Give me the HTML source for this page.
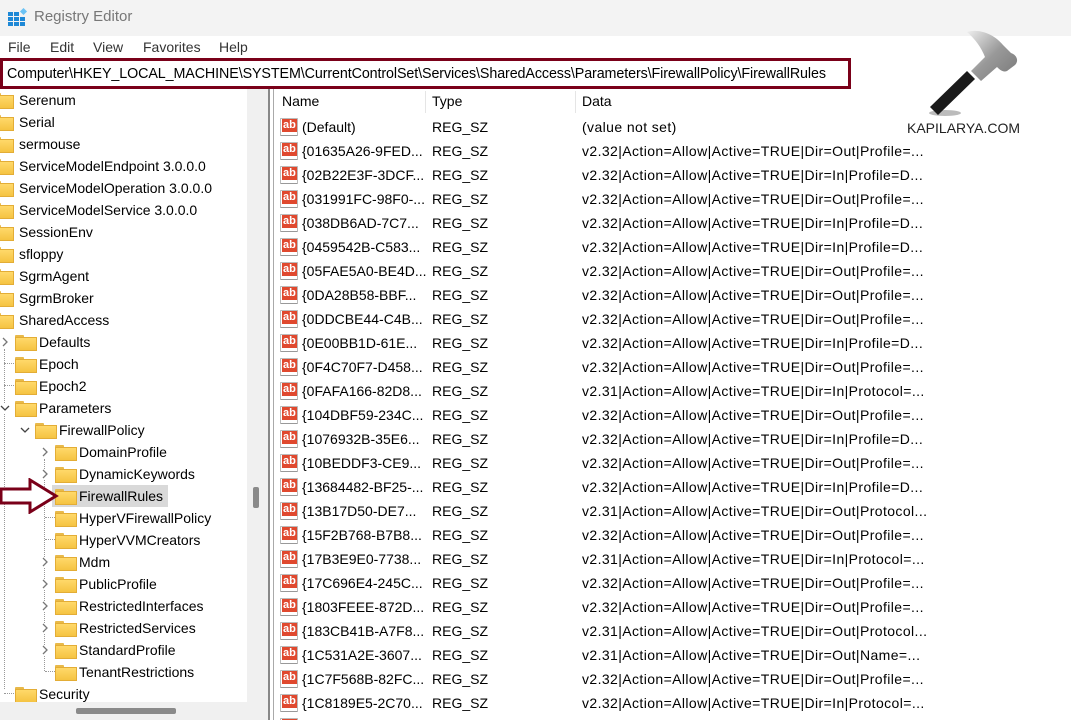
<!DOCTYPE html>
<html><head><meta charset="utf-8"><style>
*{margin:0;padding:0;box-sizing:border-box}
html,body{width:1071px;height:720px;overflow:hidden}
body{background:#fff;font-family:"Liberation Sans",sans-serif;font-size:14px;color:#000;position:relative}
.abs{position:absolute;white-space:nowrap}
#title{left:0;top:0;width:1071px;height:36px;background:#f3f3f3}
#menu{left:0;top:36px;width:1071px;height:22px;background:#fff;color:#333}
#addr{left:0;top:58px;width:851px;height:31px;border:3px solid #7a0019;background:#fff;padding:5px 0 0 4px;font-size:14.3px;letter-spacing:-0.1px}
.t{position:absolute;height:22px;line-height:22px;white-space:nowrap}
.fold{position:absolute;width:20px;height:14px;top:4px}
.fold:before{content:"";position:absolute;left:0;top:0;width:9px;height:4px;background:#e8b94a;border-radius:1px 1px 0 0}
.fold:after{content:"";position:absolute;left:0;top:2px;width:20px;height:12px;background:linear-gradient(#ffd96a,#f5c342);border:1px solid #e3ad36}
.chev{position:absolute;width:10px;height:10px}
.r{position:absolute;left:275px;height:24px;line-height:24px;white-space:nowrap;width:796px}
.r .ic{position:absolute;left:5px;top:3px;width:18px;height:18px;border:1px solid #bbb;border-bottom-color:#999;background:#fff;border-radius:1px}
.r .ic b{position:absolute;left:1px;top:0;font-size:11px;line-height:13px;color:#fff;background:#e0492f;padding:0 1px;font-weight:bold;font-family:"Liberation Sans",sans-serif}
.r .n{position:absolute;left:27px}
.r .ty{position:absolute;left:157px}
.r .d{position:absolute;left:307px;letter-spacing:0.4px}
</style></head><body>
<div id="title" class="abs">
 <svg style="position:absolute;left:8px;top:8px" width="20" height="19"><g fill="#1e88d6"><rect x="0" y="4" width="5" height="4"/><rect x="6" y="4" width="5" height="4"/><rect x="0" y="9" width="5" height="4"/><rect x="6" y="9" width="5" height="4"/><rect x="12" y="9" width="5" height="4"/><rect x="0" y="14" width="5" height="4"/><rect x="6" y="14" width="5" height="4"/><rect x="12" y="14" width="5" height="4"/></g><rect x="13" y="1" width="5" height="5" fill="#6cc3f5" transform="rotate(45 15.5 3.5)"/></svg>
 <span class="abs" style="left:34px;top:8px;font-size:15px;color:#777">Registry Editor</span>
</div>
<div id="menu" class="abs">
 <span class="abs" style="left:8px;top:3px">File</span>
 <span class="abs" style="left:50px;top:3px">Edit</span>
 <span class="abs" style="left:93px;top:3px">View</span>
 <span class="abs" style="left:143px;top:3px">Favorites</span>
 <span class="abs" style="left:219px;top:3px">Help</span>
</div>
<div id="addr" class="abs">Computer\HKEY_LOCAL_MACHINE\SYSTEM\CurrentControlSet\Services\SharedAccess\Parameters\FirewallPolicy\FirewallRules</div>

<!-- logo -->
<svg class="abs" style="left:925px;top:25px" width="100" height="95" viewBox="0 0 100 95">
 <defs><linearGradient id="g" x1="0" y1="0" x2="1" y2="1"><stop offset="0" stop-color="#eee"/><stop offset=".5" stop-color="#999"/><stop offset="1" stop-color="#777"/></linearGradient></defs>
 <ellipse cx="20" cy="88" rx="16" ry="3" fill="#bbb"/>
 <path d="M5 82 L42 46 L50 54 L13 90 Z" fill="#1a1a1a"/>
 <path d="M42 7 C55 3 70 10 78 20 L86 28 C92 30 94 36 90 40 L82 46 C78 48 74 44 72 42 L56 56 L46 46 L60 32 C56 22 50 14 42 7 Z" fill="url(#g)"/>
</svg>
<span class="abs" style="left:907px;top:120px;font-size:14px;color:#222">KAPILARYA.COM</span>

<!-- tree panel -->
<div class="abs" style="left:247px;top:89px;width:21px;height:631px;background:#f0f0f0"></div>
<div class="abs" style="left:253px;top:487px;width:6px;height:21px;background:#8a8a8a;border-radius:2px"></div>
<div class="abs" style="left:0;top:702px;width:247px;height:18px;background:#f0f0f0"></div>
<div class="abs" style="left:76px;top:708px;width:100px;height:6px;background:#8a8a8a;border-radius:2px"></div>
<div class="abs" style="left:268px;top:89px;width:2px;height:631px;background:#888"></div>
<div class="abs" style="left:273px;top:89px;width:1px;height:631px;background:#aaa"></div>

<div class="abs" style="left:0;top:0;width:247px;height:702px;overflow:hidden">
<div class="abs" style="left:0;top:89px;width:247px;height:613px;">
<div class="fold" style="left:-8px;top:4px"></div><div class="t" style="left:19px;top:0">Serenum</div>
<div class="fold" style="left:-8px;top:26px"></div><div class="t" style="left:19px;top:22px">Serial</div>
<div class="fold" style="left:-8px;top:48px"></div><div class="t" style="left:19px;top:44px">sermouse</div>
<div class="fold" style="left:-8px;top:70px"></div><div class="t" style="left:19px;top:66px">ServiceModelEndpoint 3.0.0.0</div>
<div class="fold" style="left:-8px;top:92px"></div><div class="t" style="left:19px;top:88px">ServiceModelOperation 3.0.0.0</div>
<div class="fold" style="left:-8px;top:114px"></div><div class="t" style="left:19px;top:110px">ServiceModelService 3.0.0.0</div>
<div class="fold" style="left:-8px;top:136px"></div><div class="t" style="left:19px;top:132px">SessionEnv</div>
<div class="fold" style="left:-8px;top:158px"></div><div class="t" style="left:19px;top:154px">sfloppy</div>
<div class="fold" style="left:-8px;top:180px"></div><div class="t" style="left:19px;top:176px">SgrmAgent</div>
<div class="fold" style="left:-8px;top:202px"></div><div class="t" style="left:19px;top:198px">SgrmBroker</div>
<div class="fold" style="left:-8px;top:224px"></div><div class="t" style="left:19px;top:220px">SharedAccess</div>
<div class="abs" style="left:4px;top:260px;height:340px;border-left:1px dotted #999"></div>
<svg class="chev" style="left:0;top:248px"><path d="M3 1 L7 5 L3 9" fill="none" stroke="#777" stroke-width="1.3"/></svg><div class="fold" style="left:15px;top:246px"></div><div class="t" style="left:39px;top:242px">Defaults</div>
<div class="abs" style="left:4px;top:274px;width:10px;border-top:1px dotted #999"></div><div class="fold" style="left:15px;top:268px"></div><div class="t" style="left:39px;top:264px">Epoch</div>
<div class="abs" style="left:4px;top:296px;width:10px;border-top:1px dotted #999"></div><div class="fold" style="left:15px;top:290px"></div><div class="t" style="left:39px;top:286px">Epoch2</div>
<svg class="chev" style="left:0;top:314px;background:#fff"><path d="M1 3 L5 7 L9 3" fill="none" stroke="#444" stroke-width="1.3"/></svg><div class="fold" style="left:15px;top:312px"></div><div class="t" style="left:39px;top:308px">Parameters</div>
<svg class="chev" style="left:20px;top:336px"><path d="M1 3 L5 7 L9 3" fill="none" stroke="#444" stroke-width="1.3"/></svg><div class="fold" style="left:35px;top:334px"></div><div class="t" style="left:59px;top:330px">FirewallPolicy</div>
<div class="abs" style="left:44px;top:370px;height:212px;border-left:1px dotted #999"></div>
<svg class="chev" style="left:40px;top:358px;background:#fff"><path d="M3 1 L7 5 L3 9" fill="none" stroke="#777" stroke-width="1.3"/></svg><div class="fold" style="left:55px;top:356px"></div><div class="t" style="left:79px;top:352px">DomainProfile</div>
<svg class="chev" style="left:40px;top:380px;background:#fff"><path d="M3 1 L7 5 L3 9" fill="none" stroke="#777" stroke-width="1.3"/></svg><div class="fold" style="left:55px;top:378px"></div><div class="t" style="left:79px;top:374px">DynamicKeywords</div>
<div class="abs" style="left:52px;top:396px;width:116px;height:22px;background:#d9d9d9"></div><div class="fold" style="left:55px;top:400px"></div><div class="t" style="left:79px;top:396px">FirewallRules</div>
<div class="abs" style="left:45px;top:428px;width:10px;border-top:1px dotted #999"></div><div class="fold" style="left:55px;top:422px"></div><div class="t" style="left:79px;top:418px">HyperVFirewallPolicy</div>
<div class="abs" style="left:45px;top:450px;width:10px;border-top:1px dotted #999"></div><div class="fold" style="left:55px;top:444px"></div><div class="t" style="left:79px;top:440px">HyperVVMCreators</div>
<svg class="chev" style="left:40px;top:468px;background:#fff"><path d="M3 1 L7 5 L3 9" fill="none" stroke="#777" stroke-width="1.3"/></svg><div class="fold" style="left:55px;top:466px"></div><div class="t" style="left:79px;top:462px">Mdm</div>
<svg class="chev" style="left:40px;top:490px;background:#fff"><path d="M3 1 L7 5 L3 9" fill="none" stroke="#777" stroke-width="1.3"/></svg><div class="fold" style="left:55px;top:488px"></div><div class="t" style="left:79px;top:484px">PublicProfile</div>
<svg class="chev" style="left:40px;top:512px;background:#fff"><path d="M3 1 L7 5 L3 9" fill="none" stroke="#777" stroke-width="1.3"/></svg><div class="fold" style="left:55px;top:510px"></div><div class="t" style="left:79px;top:506px">RestrictedInterfaces</div>
<svg class="chev" style="left:40px;top:534px;background:#fff"><path d="M3 1 L7 5 L3 9" fill="none" stroke="#777" stroke-width="1.3"/></svg><div class="fold" style="left:55px;top:532px"></div><div class="t" style="left:79px;top:528px">RestrictedServices</div>
<svg class="chev" style="left:40px;top:556px;background:#fff"><path d="M3 1 L7 5 L3 9" fill="none" stroke="#777" stroke-width="1.3"/></svg><div class="fold" style="left:55px;top:554px"></div><div class="t" style="left:79px;top:550px">StandardProfile</div>
<div class="abs" style="left:45px;top:582px;width:10px;border-top:1px dotted #999"></div><div class="fold" style="left:55px;top:576px"></div><div class="t" style="left:79px;top:572px">TenantRestrictions</div>
<div class="abs" style="left:4px;top:604px;width:10px;border-top:1px dotted #999"></div><div class="fold" style="left:15px;top:598px"></div><div class="t" style="left:39px;top:594px">Security</div>
</div>
</div>

<!-- arrow -->
<svg class="abs" style="left:0;top:478px" width="60" height="36"><path d="M1 11 H30 V2 L56 18 L30 34 V25 H1 Z" fill="#fff" stroke="#7a0019" stroke-width="3"/></svg>

<!-- list header -->
<div class="abs" style="left:282px;top:93px">Name</div>
<div class="abs" style="left:425px;top:91px;width:1px;height:22px;background:#e5e5e5"></div>
<div class="abs" style="left:432px;top:93px">Type</div>
<div class="abs" style="left:575px;top:91px;width:1px;height:22px;background:#e5e5e5"></div>
<div class="abs" style="left:582px;top:93px">Data</div>

<div class="abs" style="left:275px;top:115px;width:796px;height:605px;overflow:hidden">
<div class="r" style="left:0;top:0"><div class="ic"><b>ab</b></div><span class="n">(Default)</span><span class="ty">REG_SZ</span><span class="d">(value not set)</span></div>
<div class="r" style="left:0;top:24px"><div class="ic"><b>ab</b></div><span class="n">{01635A26-9FED...</span><span class="ty">REG_SZ</span><span class="d">v2.32|Action=Allow|Active=TRUE|Dir=Out|Profile=...</span></div>
<div class="r" style="left:0;top:48px"><div class="ic"><b>ab</b></div><span class="n">{02B22E3F-3DCF...</span><span class="ty">REG_SZ</span><span class="d">v2.32|Action=Allow|Active=TRUE|Dir=In|Profile=D...</span></div>
<div class="r" style="left:0;top:72px"><div class="ic"><b>ab</b></div><span class="n">{031991FC-98F0-...</span><span class="ty">REG_SZ</span><span class="d">v2.32|Action=Allow|Active=TRUE|Dir=Out|Profile=...</span></div>
<div class="r" style="left:0;top:96px"><div class="ic"><b>ab</b></div><span class="n">{038DB6AD-7C7...</span><span class="ty">REG_SZ</span><span class="d">v2.32|Action=Allow|Active=TRUE|Dir=In|Profile=D...</span></div>
<div class="r" style="left:0;top:120px"><div class="ic"><b>ab</b></div><span class="n">{0459542B-C583...</span><span class="ty">REG_SZ</span><span class="d">v2.32|Action=Allow|Active=TRUE|Dir=In|Profile=D...</span></div>
<div class="r" style="left:0;top:144px"><div class="ic"><b>ab</b></div><span class="n">{05FAE5A0-BE4D...</span><span class="ty">REG_SZ</span><span class="d">v2.32|Action=Allow|Active=TRUE|Dir=Out|Profile=...</span></div>
<div class="r" style="left:0;top:168px"><div class="ic"><b>ab</b></div><span class="n">{0DA28B58-BBF...</span><span class="ty">REG_SZ</span><span class="d">v2.32|Action=Allow|Active=TRUE|Dir=Out|Profile=...</span></div>
<div class="r" style="left:0;top:192px"><div class="ic"><b>ab</b></div><span class="n">{0DDCBE44-C4B...</span><span class="ty">REG_SZ</span><span class="d">v2.32|Action=Allow|Active=TRUE|Dir=Out|Profile=...</span></div>
<div class="r" style="left:0;top:216px"><div class="ic"><b>ab</b></div><span class="n">{0E00BB1D-61E...</span><span class="ty">REG_SZ</span><span class="d">v2.32|Action=Allow|Active=TRUE|Dir=In|Profile=D...</span></div>
<div class="r" style="left:0;top:240px"><div class="ic"><b>ab</b></div><span class="n">{0F4C70F7-D458...</span><span class="ty">REG_SZ</span><span class="d">v2.32|Action=Allow|Active=TRUE|Dir=Out|Profile=...</span></div>
<div class="r" style="left:0;top:264px"><div class="ic"><b>ab</b></div><span class="n">{0FAFA166-82D8...</span><span class="ty">REG_SZ</span><span class="d">v2.31|Action=Allow|Active=TRUE|Dir=In|Protocol=...</span></div>
<div class="r" style="left:0;top:288px"><div class="ic"><b>ab</b></div><span class="n">{104DBF59-234C...</span><span class="ty">REG_SZ</span><span class="d">v2.32|Action=Allow|Active=TRUE|Dir=Out|Profile=...</span></div>
<div class="r" style="left:0;top:312px"><div class="ic"><b>ab</b></div><span class="n">{1076932B-35E6...</span><span class="ty">REG_SZ</span><span class="d">v2.32|Action=Allow|Active=TRUE|Dir=In|Profile=D...</span></div>
<div class="r" style="left:0;top:336px"><div class="ic"><b>ab</b></div><span class="n">{10BEDDF3-CE9...</span><span class="ty">REG_SZ</span><span class="d">v2.32|Action=Allow|Active=TRUE|Dir=Out|Profile=...</span></div>
<div class="r" style="left:0;top:360px"><div class="ic"><b>ab</b></div><span class="n">{13684482-BF25-...</span><span class="ty">REG_SZ</span><span class="d">v2.32|Action=Allow|Active=TRUE|Dir=In|Profile=D...</span></div>
<div class="r" style="left:0;top:384px"><div class="ic"><b>ab</b></div><span class="n">{13B17D50-DE7...</span><span class="ty">REG_SZ</span><span class="d">v2.31|Action=Allow|Active=TRUE|Dir=Out|Protocol...</span></div>
<div class="r" style="left:0;top:408px"><div class="ic"><b>ab</b></div><span class="n">{15F2B768-B7B8...</span><span class="ty">REG_SZ</span><span class="d">v2.32|Action=Allow|Active=TRUE|Dir=Out|Profile=...</span></div>
<div class="r" style="left:0;top:432px"><div class="ic"><b>ab</b></div><span class="n">{17B3E9E0-7738...</span><span class="ty">REG_SZ</span><span class="d">v2.31|Action=Allow|Active=TRUE|Dir=In|Protocol=...</span></div>
<div class="r" style="left:0;top:456px"><div class="ic"><b>ab</b></div><span class="n">{17C696E4-245C...</span><span class="ty">REG_SZ</span><span class="d">v2.32|Action=Allow|Active=TRUE|Dir=Out|Profile=...</span></div>
<div class="r" style="left:0;top:480px"><div class="ic"><b>ab</b></div><span class="n">{1803FEEE-872D...</span><span class="ty">REG_SZ</span><span class="d">v2.32|Action=Allow|Active=TRUE|Dir=Out|Profile=...</span></div>
<div class="r" style="left:0;top:504px"><div class="ic"><b>ab</b></div><span class="n">{183CB41B-A7F8...</span><span class="ty">REG_SZ</span><span class="d">v2.31|Action=Allow|Active=TRUE|Dir=Out|Protocol...</span></div>
<div class="r" style="left:0;top:528px"><div class="ic"><b>ab</b></div><span class="n">{1C531A2E-3607...</span><span class="ty">REG_SZ</span><span class="d">v2.31|Action=Allow|Active=TRUE|Dir=Out|Name=...</span></div>
<div class="r" style="left:0;top:552px"><div class="ic"><b>ab</b></div><span class="n">{1C7F568B-82FC...</span><span class="ty">REG_SZ</span><span class="d">v2.32|Action=Allow|Active=TRUE|Dir=Out|Profile=...</span></div>
<div class="r" style="left:0;top:576px"><div class="ic"><b>ab</b></div><span class="n">{1C8189E5-2C70...</span><span class="ty">REG_SZ</span><span class="d">v2.32|Action=Allow|Active=TRUE|Dir=In|Protocol=...</span></div>
<div class="r" style="left:0;top:600px"><div class="ic"><b>ab</b></div></div>
</div>
</body></html>
